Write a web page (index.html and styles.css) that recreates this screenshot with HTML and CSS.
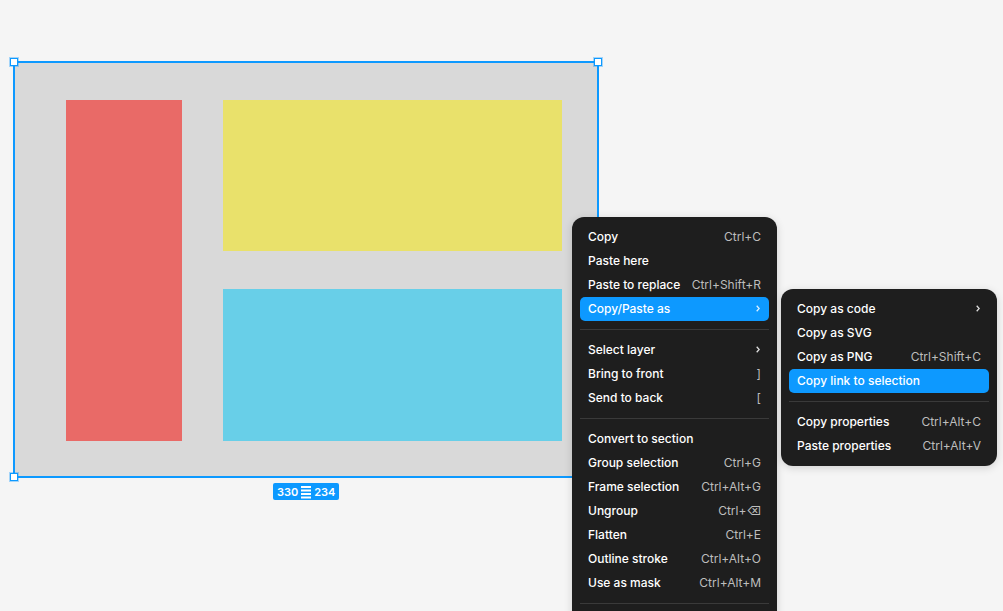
FILE: index.html
```html
<!DOCTYPE html>
<html>
<head>
<meta charset="utf-8">
<link rel="stylesheet" href="styles.css">
</head>
<body>
<div class="canvas">
  <div class="frame">
    <div class="shape red"></div>
    <div class="shape yellow"></div>
    <div class="shape cyan"></div>
    <span class="handle tl"></span>
    <span class="handle tr"></span>
    <span class="handle bl"></span>
    <span class="handle br"></span>
    <div class="size-badge">330<svg class="hug" width="10" height="15" viewBox="0 0 10 15"><rect x="0" y="1" width="10" height="2" fill="#fff"/><rect x="0" y="4.5" width="10" height="2" fill="#fff"/><rect x="0" y="8" width="10" height="2" fill="#fff"/><rect x="0" y="11.5" width="10" height="2" fill="#fff"/></svg>234</div>
  </div>

  <div class="menu main-menu">
    <div class="item"><span>Copy</span><span class="sc">Ctrl+C</span></div>
    <div class="item"><span>Paste here</span></div>
    <div class="item"><span>Paste to replace</span><span class="sc">Ctrl+Shift+R</span></div>
    <div class="item active"><span>Copy/Paste as</span><svg class="chev" width="4" height="7" viewBox="0 0 4 7"><path d="M0.7 0.7 L3.2 3.5 L0.7 6.3" fill="none" stroke="#fff" stroke-width="1.3"/></svg></div>
    <div class="sep"></div>
    <div class="item"><span>Select layer</span><svg class="chev" width="4" height="7" viewBox="0 0 4 7"><path d="M0.7 0.7 L3.2 3.5 L0.7 6.3" fill="none" stroke="#fff" stroke-width="1.3"/></svg></div>
    <div class="item"><span>Bring to front</span><span class="sc">]</span></div>
    <div class="item"><span>Send to back</span><span class="sc">[</span></div>
    <div class="sep"></div>
    <div class="item"><span>Convert to section</span></div>
    <div class="item"><span>Group selection</span><span class="sc">Ctrl+G</span></div>
    <div class="item"><span>Frame selection</span><span class="sc">Ctrl+Alt+G</span></div>
    <div class="item"><span>Ungroup</span><span class="sc">Ctrl+⌫</span></div>
    <div class="item"><span>Flatten</span><span class="sc">Ctrl+E</span></div>
    <div class="item"><span>Outline stroke</span><span class="sc">Ctrl+Alt+O</span></div>
    <div class="item"><span>Use as mask</span><span class="sc">Ctrl+Alt+M</span></div>
    <div class="sep"></div>
    <div class="item"></div>
  </div>

  <div class="menu sub-menu">
    <div class="item"><span>Copy as code</span><svg class="chev" width="4" height="7" viewBox="0 0 4 7"><path d="M0.7 0.7 L3.2 3.5 L0.7 6.3" fill="none" stroke="#fff" stroke-width="1.3"/></svg></div>
    <div class="item"><span>Copy as SVG</span></div>
    <div class="item"><span>Copy as PNG</span><span class="sc">Ctrl+Shift+C</span></div>
    <div class="item active"><span>Copy link to selection</span></div>
    <div class="sep"></div>
    <div class="item"><span>Copy properties</span><span class="sc">Ctrl+Alt+C</span></div>
    <div class="item"><span>Paste properties</span><span class="sc">Ctrl+Alt+V</span></div>
  </div>
</div>
</body>
</html>
```

FILE: styles.css
```css
* { box-sizing: border-box; }
html, body {
  margin: 0;
  padding: 0;
  width: 1003px;
  height: 611px;
  overflow: hidden;
  background: #f5f5f5;
  font-family: "Inter", "Noto Sans", sans-serif;
}
.canvas {
  position: relative;
  width: 1003px;
  height: 611px;
}
.frame {
  position: absolute;
  left: 13px;
  top: 61px;
  width: 586px;
  height: 417px;
  background: #d9d9d9;
  border: 2px solid #0d99ff;
}
.shape { position: absolute; }
.red { left: 51px; top: 37px; width: 116px; height: 341px; background: #e96a67; }
.yellow { left: 208px; top: 37px; width: 339px; height: 151px; background: #e9e16b; }
.cyan { left: 208px; top: 226px; width: 339px; height: 152px; background: #68cfe8; }

.handle {
  position: absolute;
  width: 8px;
  height: 8px;
  background: #fff;
  border: 1px solid #0d99ff;
  box-shadow: 0 0 0 1px rgba(13,153,255,0.35);
}
.tl { left: -5px; top: -5px; }
.tr { right: -5px; top: -5px; }
.bl { left: -5px; bottom: -5px; }
.br { right: -5px; bottom: -5px; }

.size-badge {
  position: absolute;
  left: 258px;
  top: 420px;
  height: 17px;
  padding: 1px 4px 0;
  background: #0d99ff;
  border-radius: 2px;
  color: #fff;
  font-size: 11px;
  font-weight: 600;
  display: flex;
  align-items: center;
  gap: 3px;
  line-height: 16px;
}
.hug { display: block; }

.menu {
  position: absolute;
  background: #1e1e1e;
  border-radius: 12px;
  padding: 8px;
  color: #fff;
  font-size: 12px;
  font-weight: 500;
  box-shadow: 0 2px 8px rgba(0,0,0,0.15);
}
.main-menu { left: 572px; top: 217px; width: 205px; }
.sub-menu { left: 781px; top: 289px; width: 216px; }

.item {
  height: 24px;
  padding: 0 8px 2px;
  display: flex;
  align-items: center;
  justify-content: space-between;
  border-radius: 5px;
  white-space: nowrap;
}
.item.active { background: #0d99ff; }
.sc { color: #bdbdbd; font-weight: 400; }
.chev { display: block; margin-right: 1px; margin-top: 1px; opacity: 0.85; }
.sep {
  height: 1px;
  background: #3a3a3a;
  margin: 8px 0;
}
```
